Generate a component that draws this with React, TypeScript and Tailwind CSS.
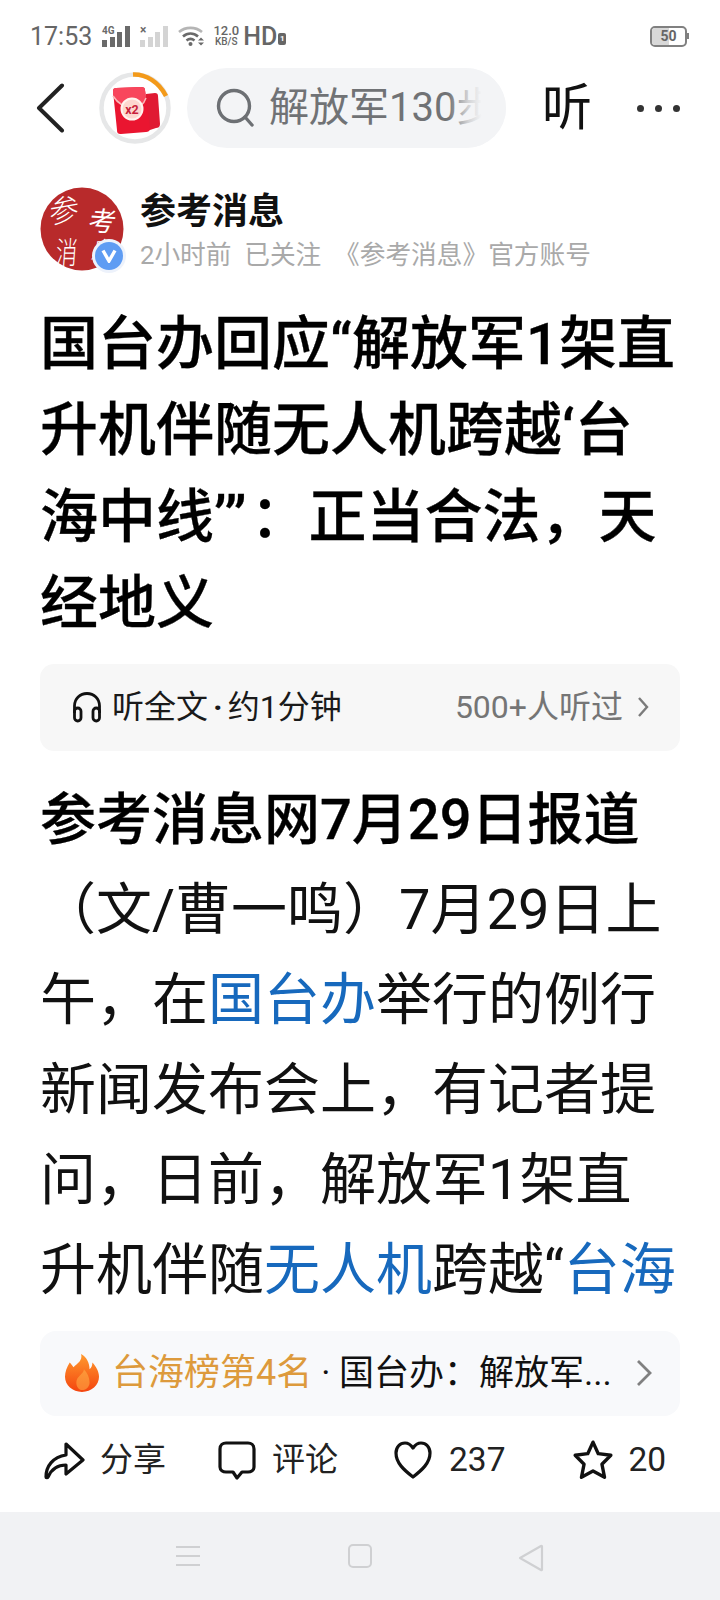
import React from "react";

function SignalBars({ dim, label }: { dim?: boolean; label: string }) {
  const c = dim ? "#d4d4d4" : "#6a6a6a";
  return (
    <svg className="overflow-visible" width="30" height="22" viewBox="0 0 30 22">
      <text x="1" y="9" fontSize={dim ? 12 : 10} fontWeight="700" fill="#6a6a6a" fontFamily="Roboto, sans-serif">{label}</text>
      <rect x="1" y="15" width="5" height="7" fill={c} />
      <rect x="9" y="12" width="5" height="10" fill={c} />
      <rect x="16" y="7" width="5" height="15" fill={c} />
      <rect x="24" y="1" width="5" height="21" fill={c} />
    </svg>
  );
}

function Wifi() {
  return (
    <svg width="28" height="20" viewBox="0 0 28 20" fill="none">
      <path d="M1 6C7.5 0.5 17.5 0.5 24 6" stroke="#b5b5b5" strokeWidth="2.6" />
      <path d="M5 10.5C9.5 6.5 15.5 6.5 20 10.5" stroke="#6a6a6a" strokeWidth="2.6" />
      <path d="M8.5 14.5C11 12.5 14 12.5 16.5 14.5" stroke="#6a6a6a" strokeWidth="2.6" />
      <circle cx="12.5" cy="18" r="2" fill="#6a6a6a" />
      <path d="M20 14.5L23 11.5L26 14.5ZM20 16.5L23 19.5L26 16.5Z" fill="#6a6a6a" />
    </svg>
  );
}

function Ring() {
  return (
    <div className="relative w-[72px] h-[72px] shrink-0">
      <svg width="72" height="72" viewBox="0 0 72 72" fill="none">
        <circle cx="36" cy="36" r="33.5" stroke="#e6e7e8" strokeWidth="4.5" />
        <path d="M34 2.5C47 2 60 10 67 24" stroke="#f39a1a" strokeWidth="4.5" />
        <path d="M47 22L56 21C58 21 59 22 59 24L61 52C61 55 59 56 57 56L45 60Z" fill="#e01a33" />
        <path d="M14 19C14 17 15 16 17 16L42 15C45 15 46 16 46 18L51 56C51 59 49 60 47 60L22 62C19 62 18 61 18 58Z" fill="#ea1530" />
        <path d="M14 24C19 32 27 36 33 36C40 36 45 32 47 26L46 18C46 16 45 15 42 15L17 16C15 16 14 17 14 19Z" fill="#f8465c" />
        <path d="M14 24C19 32 27 36 33 36C40 36 45 32 47 26" stroke="#fbb8b8" strokeWidth="1.5" />
        <circle cx="33" cy="37" r="10.5" fill="#fdd7cf" stroke="#fff3ee" strokeWidth="2" />
        <text x="33" y="41.5" textAnchor="middle" fontSize="12.5" fontWeight="700" fill="#c81f3b" fontFamily="Roboto, sans-serif">x2</text>
      </svg>
    </div>
  );
}

function Avatar() {
  return (
    <div className="relative w-[84px] h-[84px] shrink-0">
      <svg className="overflow-visible" width="84" height="84" viewBox="0 0 84 84">
        <circle cx="42" cy="42" r="41.5" fill="#b82a2b" />
        <g fill="#fff" fontFamily="'Noto Sans CJK SC', sans-serif" fontWeight="300">
          <text x="0" y="0" fontSize="30" transform="translate(9 37) rotate(-10) skewX(-12)">参</text>
          <text x="0" y="0" fontSize="27" fontWeight="400" transform="translate(47 43) rotate(4) skewX(-8)">考</text>
          <text x="0" y="0" fontSize="27" transform="translate(15 77) scale(0.8 1.15) skewX(-6)">消</text>
          <text x="0" y="0" fontSize="24" transform="translate(50 72) skewX(-8)">息</text>
        </g>
      </svg>
      <div className="absolute right-[-2px] bottom-[-2px] w-[34px] h-[34px] rounded-full bg-[#edf2fb] flex items-center justify-center">
        <div className="w-[28px] h-[28px] rounded-full bg-[#5e9cf3] flex items-center justify-center">
          <svg width="16" height="14" viewBox="0 0 16 14" fill="none">
            <path d="M2 1.5L8 12L14 1.5" stroke="#fff" strokeWidth="3.4" />
          </svg>
        </div>
      </div>
    </div>
  );
}

function Link({ children }: { children: React.ReactNode }) {
  return <span className="text-[#1769bd]">{children}</span>;
}

export default function App() {
  return (
    <div className="w-[720px] h-[1600px] bg-white flex flex-col overflow-hidden [font-family:Roboto,'Noto_Sans_CJK_SC',sans-serif] text-[#111]">
      {/* status bar */}
      <div className="h-[68px] pt-[22px] pl-[30px] pr-[30px] flex items-start">
        <div className="flex items-center h-[28px] w-full text-[#666]">
          <span className="text-[25px] leading-none">17:53</span>
          <div className="ml-[9px]"><SignalBars label="4G" /></div>
          <div className="ml-[8px]"><SignalBars dim label="×" /></div>
          <div className="ml-[9px]"><Wifi /></div>
          <div className="ml-[6px] w-[28px] flex flex-col items-center text-[11px] leading-[11px] font-medium">
            <span className="text-[13px] leading-[12px]">12.0</span>
            <span className="text-[10px] leading-[10px]">KB/S</span>
          </div>
          <span className="ml-[3px] text-[25px] leading-none font-medium">HD</span>
          <span className="ml-[1px] mt-[6px] w-[8px] h-[12px] rounded-[2px] bg-[#666] text-white text-[8px] leading-[12px] text-center font-bold">1</span>
          <div className="ml-auto relative w-[40px] h-[21px] mr-[0px]">
            <div className="w-[37px] h-[21px] rounded-[5px] border-2 border-[#808080] overflow-hidden flex">
              <div className="w-[17px] bg-[#d8d8d8]" />
            </div>
            <div className="absolute right-[1px] top-[7px] w-[2px] h-[6px] bg-[#808080]" />
            <div className="absolute left-0 top-0 w-[37px] h-[21px] text-center text-[14px] leading-[21px] font-bold text-[#666]">50</div>
          </div>
        </div>
      </div>

      {/* nav */}
      <div className="h-[80px] flex items-center">
        <svg className="ml-[36px] shrink-0" width="29" height="50" viewBox="0 0 29 50" fill="none">
          <path d="M26 2.5L3 25L26 47.5" stroke="#222" strokeWidth="4" strokeLinecap="round" strokeLinejoin="round" />
        </svg>
        <div className="ml-[34px]"><Ring /></div>
        <div className="relative ml-[16px] w-[319px] h-[80px] rounded-full bg-[#f3f4f6] flex items-center overflow-hidden pl-[29px]">
          <svg className="shrink-0" width="38" height="40" viewBox="0 0 38 40" fill="none">
            <circle cx="18" cy="18" r="15.5" stroke="#6d7074" strokeWidth="3.4" />
            <path d="M29 29L36 37" stroke="#6d7074" strokeWidth="3.4" strokeLinecap="round" />
          </svg>
          <span className="ml-[15px] text-[40px] leading-none whitespace-nowrap text-[#707275]">解放军130步</span>
          <div className="absolute right-0 top-0 h-full w-[58px] bg-[linear-gradient(90deg,rgba(243,244,246,0)_0%,rgba(243,244,246,0.75)_35%,#f3f4f6_58%)]" />
        </div>
        <span className="ml-[36px] text-[50px] leading-none text-[#111]">听</span>
        <div className="ml-[45px] flex gap-[11px]">
          <div className="w-[7px] h-[7px] rounded-full bg-[#333]" />
          <div className="w-[7px] h-[7px] rounded-full bg-[#333]" />
          <div className="w-[7px] h-[7px] rounded-full bg-[#333]" />
        </div>
      </div>

      {/* author */}
      <div className="mt-[39px] ml-[40px] flex h-[84px]">
        <Avatar />
        <div className="ml-[16px] flex flex-col">
          <div className="text-[36px] leading-[50px] font-bold text-[#111]">参考消息</div>
          <div className="text-[25.7px] leading-[36px] text-[#a9a9a9] whitespace-nowrap">2小时前&nbsp; 已关注&nbsp; 《参考消息》官方账号</div>
        </div>
      </div>

      {/* title */}
      <h1 className="mt-[30px] ml-[40px] text-[58px] leading-[86.4px] font-medium text-black whitespace-nowrap [-webkit-text-stroke:0.3px_black]">
        国台办回应“解放军1架直<br />升机伴随无人机跨越‘台<br />海中线<span className="mr-[4px]">’”</span>：正当合法，天<br />经地义
      </h1>

      {/* audio card */}
      <div className="mt-[17px] mx-[40px] h-[87px] rounded-[14px] bg-[#f7f7f7] flex items-center pl-[31px] pr-[31px]">
        <svg className="shrink-0" width="32" height="32" viewBox="0 0 32 32" fill="none">
          <path d="M3.5 22V15C3.5 7.5 9 2.5 16 2.5S28.5 7.5 28.5 15V22" stroke="#111" strokeWidth="2.8" />
          <rect x="3.5" y="17" width="6.5" height="13" rx="3.2" stroke="#111" strokeWidth="2.8" />
          <rect x="22" y="17" width="6.5" height="13" rx="3.2" stroke="#111" strokeWidth="2.8" />
        </svg>
        <span className="ml-[9px] text-[32px] leading-none text-[#1a1a1a] whitespace-nowrap">听全文<span className="mx-[5px] font-bold">·</span>约1分钟</span>
        <span className="ml-auto text-[32px] leading-none text-[#757575] whitespace-nowrap">500+人听过</span>
        <svg className="ml-[14px] shrink-0" width="12" height="22" viewBox="0 0 12 22" fill="none">
          <path d="M2 2L10 11L2 20" stroke="#7b7b7b" strokeWidth="2.4" />
        </svg>
      </div>

      {/* body */}
      <div className="mt-[24px] ml-[40px] text-[56px] leading-[90px] text-[#111] whitespace-nowrap">
        <div className="font-medium text-black [-webkit-text-stroke:0.3px_black]">参考消息网7月29日报道</div>
        <div>（文/曹一鸣）7月29日上</div>
        <div>午，在<Link>国台办</Link>举行的例行</div>
        <div>新闻发布会上，有记者提</div>
        <div>问，日前，解放军1架直</div>
        <div>升机伴随<Link>无人机</Link>跨越“<Link>台海</Link></div>
      </div>

      {/* topic card */}
      <div className="mt-[16px] mx-[40px] h-[85px] rounded-[16px] bg-[#f8f9fb] flex items-center pl-[25px] pr-[28px]">
        <svg className="shrink-0" width="34" height="40" viewBox="0 0 36 40">
          <defs>
            <linearGradient id="fl" x1="0" y1="0" x2="0" y2="1">
              <stop offset="0" stopColor="#ff9a2e" />
              <stop offset="1" stopColor="#f4450f" />
            </linearGradient>
          </defs>
          <path d="M17 0C19 7 13 10 9 14C7 11 6 10 5 9C2 14 0 19 0 24C0 33 8 40 18 40C28 40 36 33 36 24C36 19 33 13 29 9C29 12 28 15 26 16C26 10 23 3 17 0Z" fill="url(#fl)" />
          <path d="M20 16C20 21 12 23 12 30C12 35 15 38 18 38C23 38 26 34 26 30C26 25 24 20 20 16Z" fill="#ffb24a" opacity="0.55" />
        </svg>
        <span className="ml-[13px] text-[36px] leading-none text-[#dd9a3c] whitespace-nowrap">台海榜第4名</span>
        <span className="ml-[9px] text-[35px] leading-none text-[#111] whitespace-nowrap">· 国台办：解放军...</span>
        <svg className="ml-auto shrink-0" width="16" height="28" viewBox="0 0 16 28" fill="none">
          <path d="M2 2L14 14L2 26" stroke="#808080" strokeWidth="2.8" />
        </svg>
      </div>

      {/* actions */}
      <div className="mt-[22px] ml-[44px] h-[44px] flex items-center text-[33px] leading-none text-[#222] whitespace-nowrap">
        <svg className="shrink-0" width="41" height="40" viewBox="0 0 41 40" fill="none">
          <path d="M2 37C2 26 9 17 22 15V4L39 20L22 34V25C14 25 8 28 4 37C3.5 38 2 38 2 37Z" stroke="#111" strokeWidth="3.2" strokeLinejoin="round" />
        </svg>
        <span className="ml-[15px]">分享</span>
        <svg className="ml-[52px] shrink-0" width="38" height="40" viewBox="0 0 38 40" fill="none">
          <path d="M8 3H30C33 3 36 5 36 9V27C36 30 33 32 30 32H24L19 38L15 32H8C5 32 2 30 2 27V9C2 5 5 3 8 3Z" stroke="#111" strokeWidth="3.2" strokeLinejoin="round" />
        </svg>
        <span className="ml-[16px]">评论</span>
        <svg className="ml-[56px] shrink-0" width="38" height="38" viewBox="0 0 38 38" fill="none">
          <path d="M19 36C10 29 2 22 2 12C2 6 6 2 11 2C14 2 17 4 19 7C21 4 24 2 27 2C32 2 36 6 36 12C36 22 28 29 19 36Z" stroke="#111" strokeWidth="3.2" strokeLinejoin="round" />
        </svg>
        <span className="ml-[17px] text-[33.5px]">237</span>
        <svg className="ml-[67px] shrink-0" width="42" height="42" viewBox="0 0 40 40" fill="none">
          <path d="M20 3L25 14L37 15.5L28.5 24L31 36.5L20 30.5L9 36.5L11.5 24L3 15.5L15 14Z" stroke="#111" strokeWidth="3.2" strokeLinejoin="round" />
        </svg>
        <span className="ml-[14px] text-[33.5px]">20</span>
      </div>

      {/* nav bar */}
      <div className="mt-auto h-[88px] bg-[#f1f2f4] flex items-start pt-[32px] pl-[176px]">
        <div className="w-[24px] h-[24px] flex flex-col justify-between py-[2px]">
          <div className="h-[2px] bg-[#cfd0d2]" />
          <div className="h-[2px] bg-[#cfd0d2]" />
          <div className="h-[2px] bg-[#cfd0d2]" />
        </div>
        <div className="ml-[148px] w-[24px] h-[24px] rounded-[5px] border-2 border-[#cfd0d2]" />
        <svg className="ml-[146px] shrink-0" width="26" height="28" viewBox="0 0 26 28" fill="none">
          <path d="M24 2.5V25.5C24 26 23.5 26.5 23 26L2 14L23 2C23.5 1.8 24 2 24 2.5Z" stroke="#cfd0d2" strokeWidth="2.2" strokeLinejoin="round" />
        </svg>
      </div>
    </div>
  );
}
